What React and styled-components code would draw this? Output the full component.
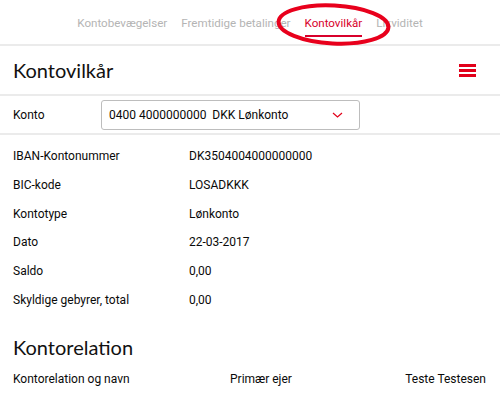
import React from 'react';
import styled, { createGlobalStyle } from 'styled-components';

const GlobalStyle = createGlobalStyle`
    body {
        margin: 0;
        background: #fff;
        font-family: Roboto, "Liberation Sans", sans-serif;
        color: #1a1a1a;
    }
`;

const Page = styled.div`
    position: relative;
    width: 500px;
    height: 406px;
    overflow: hidden;
`;

const Tabs = styled.nav`
    display: flex;
    justify-content: center;
    gap: 14px;
    height: 44px;
    border-bottom: 2px solid #ebebeb;
`;

const Tab = styled.div`
    box-sizing: border-box;
    height: 37px;
    padding-top: 16px;
    font-size: 11.6px;
    color: ${(props) => (props.active ? '#d8002b' : '#b4b4b4')};
    border-bottom: ${(props) => (props.active ? '2px solid #d8002b' : 'none')};
`;

const Header = styled.div`
    display: flex;
    align-items: center;
    justify-content: space-between;
    height: 48px;
    padding: 0 24px 0 13px;
    border-bottom: 2px solid #ebebeb;
`;

const Title = styled.h1`
    margin: 0;
    font-family: Lato, "Open Sans", sans-serif;
    font-weight: 400;
    font-size: 20px;
    color: #111;
`;

const Burger = styled.div`
    display: flex;
    flex-direction: column;
    gap: 2px;
    width: 17px;
    span {
        display: block;
        height: 3px;
        background: #e2001a;
    }
`;

const KontoRow = styled.div`
    display: flex;
    align-items: center;
    height: 37px;
    padding: 0 13px;
    border-bottom: 2px solid #ebebeb;
`;

const Label = styled.div`
    width: 176px;
    font-size: 12px;
    color: #0a0a0a;
`;

const Select = styled.div`
    display: flex;
    align-items: center;
    justify-content: space-between;
    box-sizing: border-box;
    width: 259px;
    height: 30px;
    margin-left: -88px;
    padding: 0 16px 0 7px;
    border: 1px solid #bdbdbd;
    border-radius: 3px;
    font-size: 12px;
    color: #0a0a0a;
`;

const List = styled.div`
    padding: 7px 13px 0;
`;

const Row = styled.div`
    display: flex;
    align-items: center;
    height: 28.7px;
`;

const Value = styled.div`
    font-size: 12px;
    color: #0a0a0a;
`;

const SectionTitle = styled.h2`
    margin: 21px 0 0;
    padding: 0 13px;
    font-family: Lato, "Open Sans", sans-serif;
    font-weight: 400;
    font-size: 20px;
    color: #111;
`;

const RelationRow = styled.div`
    display: grid;
    grid-template-columns: 217px 1fr auto;
    padding: 13px 14px 0 13px;
    font-size: 12px;
    color: #0a0a0a;
`;

const Annotation = styled.svg`
    position: absolute;
    left: 0;
    top: 0;
    pointer-events: none;
`;

const details = [
    ['IBAN-Kontonummer', 'DK3504004000000000'],
    ['BIC-kode', 'LOSADKKK'],
    ['Kontotype', 'Lønkonto'],
    ['Dato', '22-03-2017'],
    ['Saldo', '0,00'],
    ['Skyldige gebyrer, total', '0,00'],
];

export default function App() {
    return (
        <Page>
            <GlobalStyle />
            <Tabs>
                <Tab>Kontobevægelser</Tab>
                <Tab>Fremtidige betalinger</Tab>
                <Tab active>Kontovilkår</Tab>
                <Tab>Likviditet</Tab>
            </Tabs>
            <Header>
                <Title>Kontovilkår</Title>
                <Burger>
                    <span />
                    <span />
                    <span />
                </Burger>
            </Header>
            <KontoRow>
                <Label>Konto</Label>
                <Select>
                    <span>0400 4000000000&nbsp;&nbsp;DKK Lønkonto</span>
                    <svg width="11" height="6" viewBox="0 0 11 6">
                        <path d="M1 1 L5.5 5 L10 1" fill="none" stroke="#e2001a" strokeWidth="1.2" />
                    </svg>
                </Select>
            </KontoRow>
            <List>
                {details.map(([k, v]) => (
                    <Row key={k}>
                        <Label>{k}</Label>
                        <Value>{v}</Value>
                    </Row>
                ))}
            </List>
            <SectionTitle>Kontorelation</SectionTitle>
            <RelationRow>
                <span>Kontorelation og navn</span>
                <span>Primær ejer</span>
                <span>Teste Testesen</span>
            </RelationRow>
            <Annotation width="500" height="60">
                <ellipse cx="333.5" cy="24.5" rx="55" ry="19" fill="none" stroke="#e8001c" strokeWidth="4" transform="rotate(3 333.5 24.5)" />
            </Annotation>
        </Page>
    );
}
